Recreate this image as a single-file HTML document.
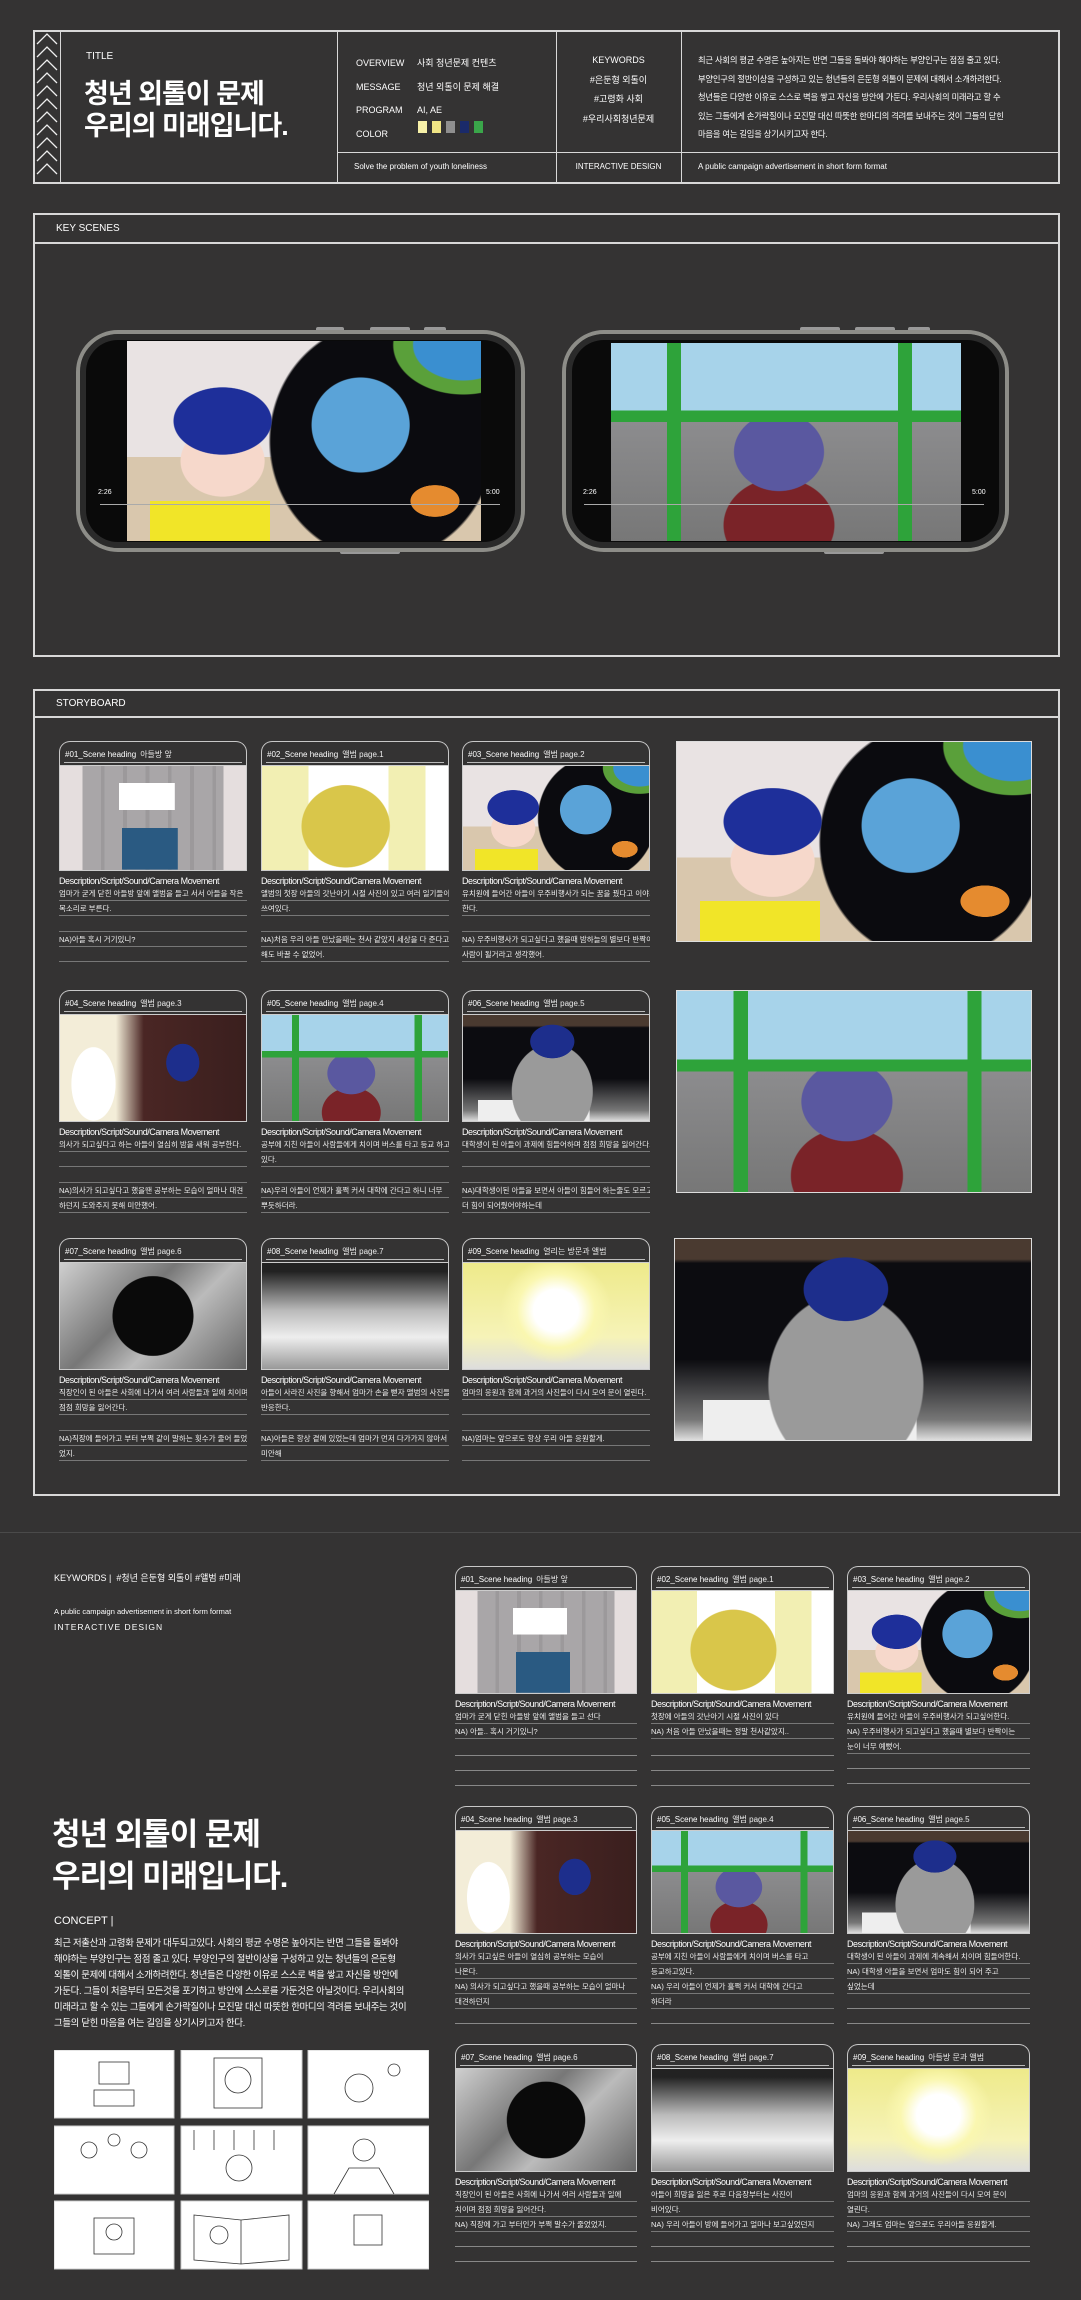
<!DOCTYPE html>
<html><head><meta charset="utf-8">
<style>
*{margin:0;padding:0;box-sizing:border-box}
body{width:1081px;height:2300px;background:#343333;position:relative;overflow:hidden;font-family:"Liberation Sans","Noto Sans CJK KR",sans-serif;color:#fff}
.a{position:absolute}
.t{position:absolute;white-space:nowrap;color:#fff}
.box{position:absolute;border:2px solid #d8d8d8}
.vl{position:absolute;width:1px;background:#d8d8d8}
.hl{position:absolute;height:1px;background:#d8d8d8}
.card{position:absolute}
.hd{height:24px;border:1px solid #c8c8c8;border-bottom:none;border-radius:11px 11px 0 0;font-size:8px;padding:7px 0 0 5px;position:relative;white-space:nowrap}
.hd:after{content:"";position:absolute;left:4px;right:4px;bottom:2px;height:1px;background:#bbb}
.hd b{font-weight:normal;margin-left:4px;opacity:.9}
.im{position:relative;overflow:hidden;border:1px solid #ccc}
.dt{font-size:9px;margin-top:5px;letter-spacing:-.45px;white-space:nowrap}
.ln{font-size:7.5px;height:15px;line-height:15px;border-bottom:1px solid #777;white-space:nowrap;overflow:hidden;color:#eee}
.ln.e{border-bottom:1px solid #888}
.s1{background:linear-gradient(#fff,#fff) 45% 22%/30% 26% no-repeat,linear-gradient(#2a5a82,#2a5a82) 48% 100%/30% 40% no-repeat,linear-gradient(90deg,#e5dede 0 12%,transparent 12% 88%,#e5dede 88%),repeating-linear-gradient(90deg,#a9a6a8 0 10%,#9c999b 10% 12%),#aaa}
.s2{background:radial-gradient(ellipse 24% 40% at 45% 58%,#d9c64a 0 98%,transparent 100%),radial-gradient(ellipse 14% 22% at 45% 40%,#f3c9c0 0 98%,transparent 100%),linear-gradient(90deg,transparent 0 25%,#fff 25% 68%,transparent 68% 100%),linear-gradient(90deg,#f2efb3 0 88%,#fff 88%)}
.s3{background:radial-gradient(ellipse 14% 24% at 66% 42%,#5aa3d8 0 98%,transparent 100%),radial-gradient(ellipse 7% 8% at 87% 80%,#e58b2f 0 98%,transparent 100%),radial-gradient(ellipse 20% 25% at 95% 2%,#3a8fd0 0 70%,#5aa03a 72% 98%,transparent 100%),radial-gradient(ellipse 14% 17% at 27% 40%,#1e2f9a 0 98%,transparent 100%),radial-gradient(ellipse 12% 18% at 27% 60%,#f6d8cb 0 98%,transparent 100%),linear-gradient(180deg,transparent 0 80%,#f1e528 80%) 10% 0/34% 100% no-repeat,radial-gradient(ellipse 32% 60% at 72% 50%,#0b0b0f 0 98%,transparent 100%),linear-gradient(180deg,#e9e3e3 0 58%,#d9c7ad 58%)}
.s4{background:radial-gradient(ellipse 9% 18% at 66% 45%,#1d2e8c 0 98%,transparent 100%),radial-gradient(ellipse 12% 35% at 18% 65%,#fff 0 98%,transparent 100%),linear-gradient(90deg,#f3edd8 0 30%,#4a2624 45%,#3a1f1e)}
.s5{background:linear-gradient(90deg,transparent 0 16%,#2ea33a 16% 20%,transparent 20% 82%,#2ea33a 82% 86%,transparent 86%),linear-gradient(180deg,transparent 0 34%,#2ea33a 34% 40%,transparent 40%),radial-gradient(ellipse 13% 20% at 48% 55%,#5a58a0 0 98%,transparent 100%),radial-gradient(ellipse 16% 24% at 48% 92%,#7a2328 0 98%,transparent 100%),linear-gradient(180deg,#a7d3ea 0 34%,#8c8c8e 40%,#777)}
.s6{background:radial-gradient(ellipse 12% 16% at 48% 25%,#1d2e8c 0 98%,transparent 100%),radial-gradient(ellipse 22% 45% at 48% 72%,#9a9a9a 0 98%,transparent 100%),linear-gradient(180deg,transparent 0 80%,#eee 80%) 20% 0/60% 100% no-repeat,linear-gradient(180deg,#4a3a30 0 10%,#0c0c10 12% 60%,#777 90%,#ddd)}
.s7{background:radial-gradient(ellipse 22% 38% at 50% 50%,#0a0a0a 0 98%,transparent 100%),linear-gradient(135deg,#cfcfcf,#777 40%,#bbb 60%,#666)}
.s8{background:linear-gradient(180deg,#222 0 8%,#bbb 45%,#eee 70%,#999)}
.s9{background:radial-gradient(ellipse 30% 50% at 50% 45%,#fff 0 40%,#faf7b0 70%,transparent 100%),linear-gradient(180deg,#eeea8a,#f6f3b8 70%,#ddd)}
</style></head><body>

<div class="box" style="left:33px;top:30px;width:1027px;height:154px"></div>
<div class="vl" style="left:60px;top:31px;height:152px"></div>
<svg class="a" style="left:34px;top:32px" width="26" height="150"><g fill="none" stroke="#eee" stroke-width="1.3">
<polyline points="3,12 13,2 23,12"/><polyline points="3,25 13,15 23,25"/><polyline points="3,38 13,28 23,38"/><polyline points="3,51 13,41 23,51"/><polyline points="3,64 13,54 23,64"/><polyline points="3,77 13,67 23,77"/><polyline points="3,90 13,80 23,90"/><polyline points="3,103 13,93 23,103"/><polyline points="3,116 13,106 23,116"/><polyline points="3,129 13,119 23,129"/><polyline points="3,142 13,132 23,142"/></g></svg>
<div class="vl" style="left:337px;top:31px;height:152px"></div>
<div class="vl" style="left:556px;top:31px;height:152px"></div>
<div class="vl" style="left:681px;top:31px;height:152px"></div>
<div class="hl" style="left:337px;top:152px;width:722px"></div>
<div class="t" style="left:86px;top:51px;font-size:10px">TITLE</div>
<div class="t" style="left:84px;top:78px;font-size:27px;font-weight:bold;line-height:32px;letter-spacing:-1px">청년 외톨이 문제<br>우리의 미래입니다.</div>
<div class="t" style="left:356px;top:52px;font-size:9px;line-height:23.5px">OVERVIEW<br>MESSAGE<br>PROGRAM<br>COLOR</div>
<div class="t" style="left:417px;top:52px;font-size:9px;line-height:23.5px">사회 청년문제 컨텐츠<br>청년 외톨이 문제 해결<br>AI, AE</div>
<div class="a" style="left:418px;top:121px;width:9px;height:12px;background:#f7f1a8"></div>
<div class="a" style="left:432px;top:121px;width:9px;height:12px;background:#f0e585"></div>
<div class="a" style="left:446px;top:121px;width:9px;height:12px;background:#8f8f8f"></div>
<div class="a" style="left:460px;top:121px;width:9px;height:12px;background:#1a2a6a"></div>
<div class="a" style="left:474px;top:121px;width:9px;height:12px;background:#3aa64a"></div>
<div class="t" style="left:556px;width:125px;text-align:center;top:51px;font-size:9px;line-height:19.5px">KEYWORDS<br>#은둔형 외톨이<br>#고령화 사회<br>#우리사회청년문제</div>
<div class="t" style="left:698px;top:51px;font-size:8.3px;line-height:18.5px;letter-spacing:-.2px">최근 사회의 평균 수명은 높아지는 반면 그들을 돌봐야 해야하는 부양인구는 점점 줄고 있다.<br>부양인구의 절반이상을 구성하고 있는 청년들의 은둔형 외톨이 문제에 대해서 소개하려한다.<br>청년들은 다양한 이유로 스스로 벽을 쌓고 자신을 방안에 가둔다. 우리사회의 미래라고 할 수<br>있는 그들에게 손가락질이나 모진말 대신 따뜻한 한마디의 격려를 보내주는 것이 그들의 닫힌<br>마음을 여는 길임을 상기시키고자 한다.</div>
<div class="t" style="left:354px;top:162px;font-size:8px">Solve the problem of youth loneliness</div>
<div class="t" style="left:556px;width:125px;text-align:center;top:162px;font-size:8px">INTERACTIVE DESIGN</div>
<div class="t" style="left:698px;top:162px;font-size:8px">A public campaign advertisement in short form format</div>

<div class="box" style="left:33px;top:213px;width:1027px;height:444px"></div>
<div class="hl" style="left:33px;top:242px;width:1027px;height:2px"></div>
<div class="t" style="left:56px;top:223px;font-size:10px">KEY SCENES</div>

<div class="a" style="left:316px;top:327px;width:28px;height:5px;background:#999;border-radius:2px"></div>
<div class="a" style="left:370px;top:327px;width:40px;height:5px;background:#999;border-radius:2px"></div>
<div class="a" style="left:424px;top:327px;width:22px;height:5px;background:#999;border-radius:2px"></div>
<div class="a" style="left:340px;top:549px;width:60px;height:5px;background:#999;border-radius:2px"></div>
<div class="a" style="left:76px;top:330px;width:449px;height:222px;background:#0a0a0a;border:4px solid #8d8d88;border-radius:42px;box-shadow:inset 0 0 0 6px #2a2a2a"></div>
<div class="a s3" style="left:127px;top:341px;width:354px;height:200px"></div>
<div class="hl" style="left:100px;top:504px;width:400px;background:#aaa"></div>
<div class="t" style="left:98px;top:489px;font-size:7px">2:26</div>
<div class="t" style="left:486px;top:489px;font-size:7px">5:00</div>

<div class="a" style="left:800px;top:327px;width:40px;height:5px;background:#999;border-radius:2px"></div>
<div class="a" style="left:855px;top:327px;width:40px;height:5px;background:#999;border-radius:2px"></div>
<div class="a" style="left:908px;top:327px;width:22px;height:5px;background:#999;border-radius:2px"></div>
<div class="a" style="left:824px;top:549px;width:60px;height:5px;background:#999;border-radius:2px"></div>
<div class="a" style="left:562px;top:330px;width:447px;height:222px;background:#0a0a0a;border:4px solid #8d8d88;border-radius:42px;box-shadow:inset 0 0 0 6px #2a2a2a"></div>
<div class="a s5" style="left:611px;top:343px;width:350px;height:198px"></div>
<div class="hl" style="left:584px;top:504px;width:400px;background:#aaa"></div>
<div class="t" style="left:583px;top:489px;font-size:7px">2:26</div>
<div class="t" style="left:972px;top:489px;font-size:7px">5:00</div>

<div class="box" style="left:33px;top:689px;width:1027px;height:807px"></div>
<div class="hl" style="left:33px;top:716px;width:1027px;height:2px"></div>
<div class="t" style="left:56px;top:698px;font-size:10px">STORYBOARD</div>

<div class="card" style="left:59px;top:741px;width:188px"><div class="hd">#01_Scene heading<b>아들방 앞</b></div><div class="im s1" style="height:106px"></div><div class="dt">Description/Script/Sound/Camera Movement</div><div class="ln">엄마가 굳게 닫힌 아들방 앞에 앨범을 들고 서서 아들을 작은</div><div class="ln">목소리로 부른다.</div><div class="ln" style="height:16px"></div><div class="ln">NA)아들 혹시 거기있니?</div><div class="ln"></div></div>
<div class="card" style="left:261px;top:741px;width:188px"><div class="hd">#02_Scene heading<b>앨범 page.1</b></div><div class="im s2" style="height:106px"></div><div class="dt">Description/Script/Sound/Camera Movement</div><div class="ln">앨범의 첫장 아들의 갓난아기 시절 사진이 있고 여러 일기들이</div><div class="ln">쓰여있다.</div><div class="ln" style="height:16px"></div><div class="ln">NA)처음 우리 아들 만났을때는 천사 같았지 세상을 다 준다고</div><div class="ln">해도 바꿀 수 없었어.</div></div>
<div class="card" style="left:462px;top:741px;width:188px"><div class="hd">#03_Scene heading<b>앨범 page.2</b></div><div class="im s3" style="height:106px"></div><div class="dt">Description/Script/Sound/Camera Movement</div><div class="ln">유치원에 들어간 아들이 우주비행사가 되는 꿈을 꿨다고 이야기</div><div class="ln">한다.</div><div class="ln" style="height:16px"></div><div class="ln">NA) 우주비행사가 되고싶다고 했을때 밤하늘의 별보다 반짝이는</div><div class="ln">사람이 될거라고 생각했어.</div></div>
<div class="a s3" style="left:676px;top:741px;width:356px;height:201px;border:1px solid #ddd"></div>

<div class="card" style="left:59px;top:990px;width:188px"><div class="hd">#04_Scene heading<b>앨범 page.3</b></div><div class="im s4" style="height:108px"></div><div class="dt">Description/Script/Sound/Camera Movement</div><div class="ln">의사가 되고싶다고 하는 아들이 열심히 밤을 새워 공부한다.</div><div class="ln"></div><div class="ln" style="height:16px"></div><div class="ln">NA)의사가 되고싶다고 했을땐 공부하는 모습이 얼마나 대견</div><div class="ln">하던지 도와주지 못해 미안했어.</div></div>
<div class="card" style="left:261px;top:990px;width:188px"><div class="hd">#05_Scene heading<b>앨범 page.4</b></div><div class="im s5" style="height:108px"></div><div class="dt">Description/Script/Sound/Camera Movement</div><div class="ln">공부에 지친 아들이 사람들에게 치이며 버스를 타고 등교 하고</div><div class="ln">있다.</div><div class="ln" style="height:16px"></div><div class="ln">NA)우리 아들이 언제가 훌쩍 커서 대학에 간다고 하니 너무</div><div class="ln">뿌듯하더라.</div></div>
<div class="card" style="left:462px;top:990px;width:188px"><div class="hd">#06_Scene heading<b>앨범 page.5</b></div><div class="im s6" style="height:108px"></div><div class="dt">Description/Script/Sound/Camera Movement</div><div class="ln">대학생이 된 아들이 과제에 힘들어하며 점점 희망을 잃어간다.</div><div class="ln"></div><div class="ln" style="height:16px"></div><div class="ln">NA)대학생이된 아들을 보면서 아들이 힘들어 하는줄도 모르고 좀</div><div class="ln">더 힘이 되어줬어야하는데</div></div>
<div class="a s5" style="left:676px;top:990px;width:356px;height:203px;border:1px solid #ddd"></div>

<div class="card" style="left:59px;top:1238px;width:188px"><div class="hd">#07_Scene heading<b>앨범 page.6</b></div><div class="im s7" style="height:108px"></div><div class="dt">Description/Script/Sound/Camera Movement</div><div class="ln">직장인이 된 아들은 사회에 나가서 여러 사람들과 일에 치이며</div><div class="ln">점점 희망을 잃어간다.</div><div class="ln" style="height:16px"></div><div class="ln">NA)직장에 들어가고 부터 부쩍 같이 말하는 횟수가 줄어 들었</div><div class="ln">었지.</div></div>
<div class="card" style="left:261px;top:1238px;width:188px"><div class="hd">#08_Scene heading<b>앨범 page.7</b></div><div class="im s8" style="height:108px"></div><div class="dt">Description/Script/Sound/Camera Movement</div><div class="ln">아들이 사라진 사진을 향해서 엄마가 손을 뻗자 앨범의 사진들이</div><div class="ln">반응한다.</div><div class="ln" style="height:16px"></div><div class="ln">NA)아들은 항상 곁에 있었는데 엄마가 먼저 다가가지 않아서</div><div class="ln">미안해</div></div>
<div class="card" style="left:462px;top:1238px;width:188px"><div class="hd">#09_Scene heading<b>열리는 방문과 앨범</b></div><div class="im s9" style="height:108px"></div><div class="dt">Description/Script/Sound/Camera Movement</div><div class="ln">엄마의 응원과 함께 과거의 사진들이 다시 모여 문이 열린다.</div><div class="ln"></div><div class="ln" style="height:16px"></div><div class="ln">NA)엄마는 앞으로도 항상 우리 아들 응원할게.</div><div class="ln"></div></div>
<div class="a s6" style="left:674px;top:1238px;width:358px;height:203px;border:1px solid #ddd"></div>

<div class="hl" style="left:0;top:1532px;width:1081px;background:#4a4a4a"></div>
<div class="t" style="left:54px;top:1571px;font-size:9px">KEYWORDS |&nbsp; #청년 은둔형 외톨이 #앨범 #미래</div>
<div class="t" style="left:54px;top:1607px;font-size:7.5px">A public campaign advertisement in short form format</div>
<div class="t" style="left:54px;top:1622px;font-size:8.5px;letter-spacing:1px">INTERACTIVE DESIGN</div>
<div class="t" style="left:52px;top:1814px;font-size:31px;font-weight:bold;line-height:42px;letter-spacing:-1px">청년 외톨이 문제<br>우리의 미래입니다.</div>
<div class="t" style="left:54px;top:1915px;font-size:11px">CONCEPT |</div>
<div class="t" style="left:54px;top:1935px;font-size:9.4px;line-height:16px;letter-spacing:-.3px">최근 저출산과 고령화 문제가 대두되고있다. 사회의 평균 수명은 높아지는 반면 그들을 돌봐야<br>해야하는 부양인구는 점점 줄고 있다. 부양인구의 절반이상을 구성하고 있는 청년들의 은둔형<br>외톨이 문제에 대해서 소개하려한다. 청년들은 다양한 이유로 스스로 벽을 쌓고 자신을 방안에<br>가둔다. 그들이 처음부터 모든것을 포기하고 방안에 스스로를 가둔것은 아닐것이다. 우리사회의<br>미래라고 할 수 있는 그들에게 손가락질이나 모진말 대신 따뜻한 한마디의 격려를 보내주는 것이<br>그들의 닫힌 마음을 여는 길임을 상기시키고자 한다.</div>

<svg class="a" style="left:54px;top:2050px" width="375" height="220"><g fill="#fff" stroke="#ccc"><rect x="0" y="0" width="120" height="68"/><rect x="127" y="0" width="121" height="68"/><rect x="254" y="0" width="121" height="68"/><rect x="0" y="76" width="120" height="68"/><rect x="127" y="76" width="121" height="68"/><rect x="254" y="76" width="121" height="68"/><rect x="0" y="151" width="120" height="68"/><rect x="127" y="151" width="121" height="68"/><rect x="254" y="151" width="121" height="68"/></g>
<g fill="none" stroke="#333" stroke-width="0.8"><rect x="45" y="12" width="30" height="22"/><rect x="40" y="40" width="40" height="16"/><rect x="160" y="8" width="48" height="50"/><circle cx="184" cy="30" r="13"/><circle cx="305" cy="38" r="14"/><circle cx="340" cy="20" r="6"/><circle cx="60" cy="90" r="6"/><circle cx="35" cy="100" r="8"/><circle cx="85" cy="100" r="8"/><line x1="140" y1="80" x2="140" y2="100"/><line x1="160" y1="80" x2="160" y2="100"/><line x1="180" y1="80" x2="180" y2="100"/><line x1="200" y1="80" x2="200" y2="100"/><line x1="220" y1="80" x2="220" y2="100"/><circle cx="185" cy="118" r="13"/><circle cx="310" cy="100" r="11"/><path d="M280 144 L295 118 L325 118 L340 144"/><rect x="40" y="168" width="40" height="36"/><circle cx="60" cy="182" r="8"/><path d="M140 165 L187 170 L235 165 L235 210 L187 214 L140 210 Z M187 170 L187 214"/><circle cx="165" cy="185" r="9"/><rect x="300" y="165" width="28" height="30"/></g></svg>

<div class="card" style="left:455px;top:1566px;width:182px"><div class="hd">#01_Scene heading<b>아들방 앞</b></div><div class="im s1" style="height:104px"></div><div class="dt">Description/Script/Sound/Camera Movement</div><div class="ln">엄마가 굳게 닫힌 아들방 앞에 앨범을 들고 선다</div><div class="ln">NA) 아들.. 혹시 거기있니?</div><div class="ln e" style="height:17px"></div><div class="ln e"></div><div class="ln e"></div></div>
<div class="card" style="left:651px;top:1566px;width:183px"><div class="hd">#02_Scene heading<b>앨범 page.1</b></div><div class="im s2" style="height:104px"></div><div class="dt">Description/Script/Sound/Camera Movement</div><div class="ln">첫장에 아들의 갓난아기 시절 사진이 있다</div><div class="ln">NA) 처음 아들 만났을때는 정말 천사같았지..</div><div class="ln e" style="height:17px"></div><div class="ln e"></div><div class="ln e"></div></div>
<div class="card" style="left:847px;top:1566px;width:183px"><div class="hd">#03_Scene heading<b>앨범 page.2</b></div><div class="im s3" style="height:104px"></div><div class="dt">Description/Script/Sound/Camera Movement</div><div class="ln">유치원에 들어간 아들이 우주비행사가 되고싶어한다.</div><div class="ln">NA) 우주비행사가 되고싶다고 했을때 별보다 반짝이는</div><div class="ln">눈이 너무 예뻤어.</div><div class="ln e"></div><div class="ln e"></div></div>

<div class="card" style="left:455px;top:1806px;width:182px"><div class="hd">#04_Scene heading<b>앨범 page.3</b></div><div class="im s4" style="height:104px"></div><div class="dt">Description/Script/Sound/Camera Movement</div><div class="ln">의사가 되고싶은 아들이 열심히 공부하는 모습이</div><div class="ln">나온다.</div><div class="ln">NA) 의사가 되고싶다고 했을때 공부하는 모습이 얼마나</div><div class="ln">대견하던지</div><div class="ln e"></div></div>
<div class="card" style="left:651px;top:1806px;width:183px"><div class="hd">#05_Scene heading<b>앨범 page.4</b></div><div class="im s5" style="height:104px"></div><div class="dt">Description/Script/Sound/Camera Movement</div><div class="ln">공부에 지친 아들이 사람들에게 치이며 버스를 타고</div><div class="ln">등교하고있다.</div><div class="ln">NA) 우리 아들이 언제가 훌쩍 커서 대학에 간다고</div><div class="ln">하더라</div><div class="ln e"></div></div>
<div class="card" style="left:847px;top:1806px;width:183px"><div class="hd">#06_Scene heading<b>앨범 page.5</b></div><div class="im s6" style="height:104px"></div><div class="dt">Description/Script/Sound/Camera Movement</div><div class="ln">대학생이 된 아들이 과제에 계속해서 치이며 힘들어한다.</div><div class="ln">NA) 대학생 아들을 보면서 엄마도 힘이 되어 주고</div><div class="ln">싶었는데</div><div class="ln e"></div><div class="ln e"></div></div>

<div class="card" style="left:455px;top:2044px;width:182px"><div class="hd">#07_Scene heading<b>앨범 page.6</b></div><div class="im s7" style="height:104px"></div><div class="dt">Description/Script/Sound/Camera Movement</div><div class="ln">직장인이 된 아들은 사회에 나가서 여러 사람들과 일에</div><div class="ln">치이며 점점 희망을 잃어간다.</div><div class="ln">NA) 직장에 가고 부터인가 부쩍 말수가 줄었었지.</div><div class="ln e"></div><div class="ln e"></div></div>
<div class="card" style="left:651px;top:2044px;width:183px"><div class="hd">#08_Scene heading<b>앨범 page.7</b></div><div class="im s8" style="height:104px"></div><div class="dt">Description/Script/Sound/Camera Movement</div><div class="ln">아들이 희망을 잃은 후로 다음장부터는 사진이</div><div class="ln">비어있다.</div><div class="ln">NA) 우리 아들이 방에 들어가고 얼마나 보고싶었던지</div><div class="ln e"></div><div class="ln e"></div></div>
<div class="card" style="left:847px;top:2044px;width:183px"><div class="hd">#09_Scene heading<b>아들방 문과 앨범</b></div><div class="im s9" style="height:104px"></div><div class="dt">Description/Script/Sound/Camera Movement</div><div class="ln">엄마의 응원과 함께 과거의 사진들이 다시 모여 문이</div><div class="ln">열린다.</div><div class="ln">NA) 그래도 엄마는 앞으로도 우리아들 응원할게.</div><div class="ln e"></div><div class="ln e"></div></div>

</body></html>
